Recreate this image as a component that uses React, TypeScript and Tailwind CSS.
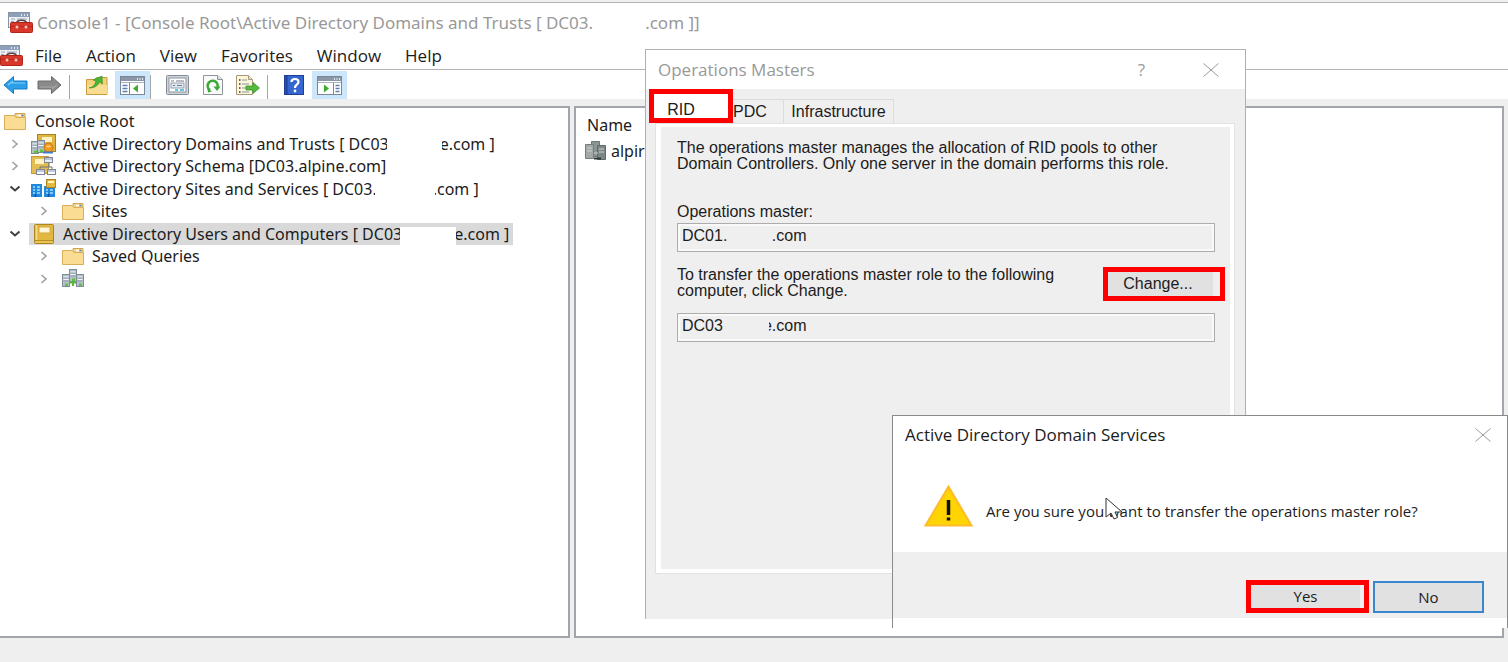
import { useState } from 'react';
import clsx from 'clsx';

const MmcIcon = () => (
  <svg width="25" height="21" viewBox="0 0 25 21">
    <rect x="0.5" y="0.5" width="21" height="15" fill="#eef1f5" stroke="#8794a6" />
    <rect x="1" y="1" width="20" height="4" fill="#8da0b8" />
    <path d="M13 3h1M16 3h1M19 3h1" stroke="#fff" strokeWidth="1.4" />
    <path d="M3 7h4M3 9.5h3M3 12h3M9 7h10" stroke="#9aa5b3" />
    <path d="M8.500 11.500c0-4.500 10-4.500 10 0" fill="none" stroke="#5a4340" strokeWidth="1.5" />
    <rect x="2.500" y="10.500" width="22" height="10" rx="1" fill="#d8382a" stroke="#b32418" />
    <path d="M3 14.500h21" stroke="#b8281b" />
    <circle cx="9" cy="15" r="1.500" fill="#f5c3bb" />
    <circle cx="18" cy="15" r="1.500" fill="#f5c3bb" />
  </svg>
);

const ArrowIcon = ({ forward = false }: any) => (
  <svg width="25" height="20" viewBox="0 0 25 20" className={clsx(forward && 'rotate-180')}>
    <path
      d="M1 10 10.500 1.500V6H24v8H10.500v4.500z"
      fill={forward ? '#8a8a8a' : '#2b9fe8'}
      stroke={forward ? '#6c6c6c' : '#1678c2'}
      strokeLinejoin="round"
    />
    <path d="M5 10 9.500 6.500V8H22" fill="none" stroke={forward ? '#a5a5a5' : '#7fd0fa'} strokeWidth="1.200" />
  </svg>
);

const UpFolderIcon = () => (
  <svg width="22" height="20" viewBox="0 0 22 20">
    <path d="M.5 4.500h8l2-2h10.500v17H.5z" fill="#f5d078" stroke="#c99b3b" />
    <path d="M1 10h20v9H1z" fill="#f8dc92" />
    <path d="M3 13c4-1 6-3 7-7L7 5l9-4 .5 8-3-2c-2 4-5 6-10.500 6z" fill="#4bb43a" stroke="#2f8f24" strokeWidth=".6" />
  </svg>
);

const PaneIcon = ({ right = false }: any) => (
  <svg width="25" height="19" viewBox="0 0 25 19">
    <rect x=".5" y=".5" width="24" height="18" fill="#fff" stroke="#7d8794" />
    <rect x="1" y="1" width="23" height="4" fill="#8b97a8" />
    <path d="M17 3h1M19.500 3h1M22 3h1" stroke="#fff" strokeWidth="1.300" />
    <path d="M1 6.500h23" stroke="#aab2bd" />
    {right ? (
      <>
        <path d="M16.500 7v11" stroke="#7d8794" />
        <path d="M18.500 9.500h4M18.500 12.500h4M18.500 15.500h4" stroke="#5c7fae" strokeWidth="1.300" />
        <path d="M7 8.500v8l5-4z" fill="#3cab2f" />
      </>
    ) : (
      <>
        <path d="M9.500 7v11" stroke="#7d8794" />
        <path d="M2.500 9.500h5M2.500 12.500h5M2.500 15.500h5" stroke="#5c7fae" strokeWidth="1.300" />
        <path d="M18 8.500v8l-5-4z" fill="#3cab2f" />
      </>
    )}
  </svg>
);

const PropertiesIcon = () => (
  <svg width="23" height="20" viewBox="0 0 23 20">
    <rect x=".5" y=".5" width="22" height="19" rx="1" fill="#cfd4da" stroke="#858c95" />
    <rect x="3" y="3" width="17" height="14" fill="#fff" stroke="#8b949f" />
    <path d="M5 6h3M10 6h8" stroke="#778" />
    <rect x="5" y="8" width="13" height="5" fill="#dfe6ee" stroke="#97a2b0" />
    <path d="M7 10.500h2M11 10.500h5" stroke="#6f7f93" />
    <path d="M9 15h3M14 15h4" stroke="#36b3e6" strokeWidth="1.500" />
  </svg>
);

const RefreshIcon = () => (
  <svg width="20" height="20" viewBox="0 0 20 20">
    <path d="M.5.5h14l5 4v15H.5z" fill="#fafafa" stroke="#8f959c" />
    <path d="M14.500.5v4h5" fill="#dde1e5" stroke="#8f959c" />
    <path d="M7 15A5 5 0 1 1 14.500 12" fill="none" stroke="#3aa935" strokeWidth="2.600" />
    <path d="M10.500 11.500h7L14 16z" fill="#3aa935" />
    <path d="M4.500 13.500 9 16.500l-4 1z" fill="#3aa935" />
  </svg>
);

const ExportIcon = () => (
  <svg width="24" height="20" viewBox="0 0 24 20">
    <path d="M.5.5h12l4 4v15H.5z" fill="#fdf6d8" stroke="#a39a7d" />
    <path d="M12.500.5v4h4" fill="#eee2b2" stroke="#a39a7d" />
    <path d="M3 5h1.500M3 9h1.500M3 13h1.500M3 17h1.500" stroke="#334" strokeWidth="1.500" />
    <path d="M6 5h5M6 9h7M6 13h5M6 17h7" stroke="#8d93a6" strokeWidth="1.200" />
    <path d="M10 11h7V7.500l6.500 5.500-6.500 5.500V15h-7z" fill="#55bb3f" stroke="#318f24" strokeWidth=".7" />
  </svg>
);

const HelpIcon = () => (
  <svg width="20" height="20" viewBox="0 0 20 20">
    <rect x=".5" y=".5" width="19" height="19" fill="#3565cf" stroke="#1f3f94" />
    <path d="M2.500 1v18" stroke="#20409a" strokeWidth="2" />
    <path d="M7.500 7c0-4 7-4 7 0 0 2.500-3.500 2.500-3.500 6" fill="none" stroke="#fff" strokeWidth="2.200" />
    <circle cx="11" cy="16" r="1.400" fill="#fff" />
  </svg>
);

const FolderIcon = () => (
  <svg width="22" height="17" viewBox="0 0 22 17">
    <path d="M11 .5h10v4H11z" fill="#f3d389" stroke="#cfa54d" />
    <path d="M14 2.500h3" stroke="#fff" strokeWidth="1.500" />
    <path d="M17.500 2.500h2" stroke="#3f83c9" strokeWidth="1.500" />
    <path d="M.5 2.500h9.500l2 2h9.500v12H.5z" fill="#fbdc93" stroke="#d9ae5a" />
  </svg>
);

const BookIcon = () => (
  <svg width="20" height="20" viewBox="0 0 20 20">
    <rect x=".5" y=".5" width="19" height="19" rx="1" fill="#e2b83f" stroke="#ae8521" />
    <path d="M2.500 1v15" stroke="#f5dd87" strokeWidth="1.500" />
    <rect x="5" y="3" width="11" height="6" fill="#fff6d6" stroke="#d2a93c" />
    <path d="M1 16.500h18" stroke="#b98e24" />
    <path d="M1 18h18" stroke="#f0d069" />
  </svg>
);

const Server = ({ x, y }: any) => (
  <g transform={`translate(${x} ${y})`}>
    <rect x=".5" y=".5" width="7" height="12" fill="#b5c1cb" stroke="#7f8b97" />
    <path d="M1.500 3h5M1.500 5.500h5" stroke="#f4f7f9" strokeWidth="1.200" />
    <path d="M1.500 4.200h5M1.500 7h5" stroke="#7f8b97" strokeWidth=".7" />
    <rect x="3" y="9.500" width="3" height="2.500" fill="#5fc23a" />
  </g>
);

const DomainsIcon = () => (
  <svg width="25" height="20" viewBox="0 0 25 20">
    <rect x="6.500" y=".5" width="18" height="17" fill="#e0b640" stroke="#aa8222" />
    <rect x="11" y="3" width="10" height="5" fill="#fff2c4" />
    <Server x={0} y={7} />
    <Server x={6} y={6} />
    <circle cx="17.500" cy="13.500" r="4.500" fill="#f39a1e" stroke="#c47410" />
    <path d="M15.500 12.500h4" stroke="#ffd88a" strokeWidth="1.500" />
    <path d="M12 18.500h10" stroke="#3b7fd1" strokeWidth="2" />
  </svg>
);

const SchemaIcon = () => (
  <svg width="25" height="20" viewBox="0 0 25 20">
    <rect x=".5" y=".5" width="17" height="17" fill="#e3bd52" stroke="#c39c3a" />
    <rect x="4" y="3" width="9" height="5" fill="#fff2c4" />
    <path d="M18 6v5M9 14v-3h12v3" fill="none" stroke="#69727d" />
    <rect x="13.500" y="1.500" width="8" height="5" fill="#e8ecf3" stroke="#7c8694" />
    <rect x="5.500" y="13.500" width="8" height="5" fill="#f7f9fc" stroke="#7c8694" />
    <rect x="16.500" y="13.500" width="8" height="5" fill="#f7f9fc" stroke="#7c8694" />
    <path d="M14 3h7M6 15h7M17 15h7" stroke="#8d9bb8" />
  </svg>
);

const SitesIcon = () => (
  <svg width="25" height="19" viewBox="0 0 25 19">
    <path d="M0 5h11v13H0zM13 7h11v11H13z" fill="#2088dd" />
    <path d="M2 8h2M6 8h3M2 11h2M6 11h3M2 14h2M6 14h3M15 11h2M19 11h3M15 14h2M19 14h3" stroke="#a8dcff" strokeWidth="1.500" />
    <path d="M4.500 18v-3M17.500 18v-3" stroke="#0d4f9e" strokeWidth="1.500" />
    <rect x="15.500" y=".5" width="9" height="8" fill="#e4b83c" stroke="#ae8521" />
    <path d="M17 3h6" stroke="#fff2c4" strokeWidth="2" />
  </svg>
);

const DomainIcon = () => (
  <svg width="24" height="20" viewBox="0 0 24 20">
    <Server x={8} y={0} />
    <Server x={1} y={5} />
    <Server x={15} y={5} />
    <path d="M9 13.500h6M12 13v4" stroke="#57b935" strokeWidth="2" />
  </svg>
);

const GreyDomainIcon = () => (
  <svg width="22" height="20" viewBox="0 0 22 20">
    <path d="M6.500.5h8v15h-8z" fill="#8d9494" stroke="#6f7676" />
    <path d="M.5 3.500h8v14h-8z" fill="#a2a9a9" stroke="#767d7d" />
    <path d="M12.500 4.500h8v14h-8z" fill="#7e8787" stroke="#626969" />
    <path d="M2 7h5M2 10h5M14 8h5M14 11h5M9 12h4" stroke="#c9cfcf" />
    <path d="M9 17.500h7" stroke="#2f3535" strokeWidth="2" />
  </svg>
);

const WarningIcon = () => (
  <svg width="49" height="42" viewBox="0 0 49 42">
    <path d="M24.500 1.500 47.500 40.500H1.500z" fill="#ffd400" stroke="#fdbb2d" strokeWidth="2" />
    <path d="M24.500 15v15" stroke="#111" strokeWidth="3.500" />
    <path d="M24.500 32.500v3" stroke="#111" strokeWidth="3.500" />
  </svg>
);

const CloseIcon = () => (
  <svg width="16" height="14" viewBox="0 0 16 14">
    <path d="M.5.5l15 13M15.500.5l-15 13" stroke="#999" fill="none" />
  </svg>
);

const Chevron = ({ open = false }: any) =>
  open ? (
    <svg width="12" height="8" viewBox="0 0 12 8">
      <path d="M1.500 1.500 6 5.500l4.500-4" fill="none" stroke="#404040" strokeWidth="2" />
    </svg>
  ) : (
    <svg width="8" height="10" viewBox="0 0 8 10">
      <path d="M1.500 1 6 5 1.500 9" fill="none" stroke="#a0a0a0" strokeWidth="1.600" />
    </svg>
  );

const tree = [
  { before: 'Active Directory Domains and Trusts [ DC03', after: 'e.com ]', gap: 'w-[55px]', icon: <DomainsIcon /> },
  { before: 'Active Directory Schema [DC03.alpine.com]', icon: <SchemaIcon /> },
  { before: 'Active Directory Sites and Services [ DC03.', after: '.com ]', gap: 'w-[60px]', icon: <SitesIcon />, open: true },
  { before: 'Sites', icon: <FolderIcon />, child: true },
  { before: 'Active Directory Users and Computers [ DC03', after: 'e.com ]', gap: 'w-[56px]', icon: <BookIcon />, open: true, selected: true },
  { before: 'Saved Queries', icon: <FolderIcon />, child: true },
  { before: '', icon: <DomainIcon />, child: true },
];

const Separator = () => <span className="h-6 w-px bg-[#a8a8a8]" />;

const ToolButton = ({ label, className, active, children }: any) => (
  <button
    aria-label={label}
    className={clsx('flex h-7 items-center justify-center', active && 'bg-[#cce6fb]', className)}
  >
    {children}
  </button>
);

const Console = () => (
  <div className="flex min-h-screen flex-col bg-[#efefef] font-['Noto_Sans','Open_Sans',sans-serif]">
    <div className="h-[2px]" />
    <header className="border-t border-[#b4b4b8] bg-white">
      <div className="flex h-[39px] items-center gap-1 pl-2 text-[17px] text-[#999]">
        <MmcIcon />
        <h1 className="whitespace-pre">
          Console1 - [Console Root\Active Directory Domains and Trusts [ DC03.
          <span className="inline-block w-[52px]" />
          .com ]]
        </h1>
      </div>
      <nav className="flex h-7 items-center gap-6 border-b border-[#b4b4b8] font-['Open_Sans','Noto_Sans',sans-serif] text-[17px] text-[#1c1c1c]">
        <div className="-ml-[2px] -mr-3">
          <MmcIcon />
        </div>
        {['File', 'Action', 'View', 'Favorites', 'Window', 'Help'].map((item) => (
          <button key={item}>{item}</button>
        ))}
      </nav>
      <div className="flex h-[29px] items-end">
        <ToolButton label="Back" className="w-[30px]"><ArrowIcon /></ToolButton>
        <ToolButton label="Forward" className="w-[39px]"><ArrowIcon forward /></ToolButton>
        <Separator />
        <ToolButton label="Up one level" className="ml-[9px] w-9"><UpFolderIcon /></ToolButton>
        <ToolButton label="Console tree" className="w-[35px]" active><PaneIcon /></ToolButton>
        <Separator />
        <ToolButton label="Properties" className="ml-2 w-9"><PropertiesIcon /></ToolButton>
        <ToolButton label="Refresh" className="w-9"><RefreshIcon /></ToolButton>
        <ToolButton label="Export list" className="mr-[2px] w-[34px]"><ExportIcon /></ToolButton>
        <Separator />
        <ToolButton label="Help topics" className="ml-2 w-9"><HelpIcon /></ToolButton>
        <ToolButton label="Action pane" className="w-[35px]" active><PaneIcon right /></ToolButton>
      </div>
    </header>

    <main className="mt-[7px] mb-6 flex flex-1 gap-1 pr-1">
      <section className="w-[570px] border-2 border-l-0 border-[#a3a5ac] bg-white pt-[2px] text-[16px] text-[#1c1c1c]">
        <ul className="grid h-[180px] auto-rows-fr">
          <li className="flex items-center gap-[9px] pl-1">
            <FolderIcon />
            Console Root
          </li>
          {tree.map((node) => (
            <li key={node.before} className={clsx('flex items-center', node.child && 'pl-[29px]')}>
              <span className="flex w-[29px] justify-center">
                <Chevron open={node.open} />
              </span>
              <span className={clsx('flex h-full items-center pr-1', node.selected && 'bg-[#d9d9d9]')}>
                <span className="mr-[5px] flex w-[29px] justify-center">{node.icon}</span>
                <span className="whitespace-pre">{node.before}</span>
                {node.after && (
                  <>
                    <span className={clsx('relative -mx-[2px] h-[18px] self-end bg-white', node.gap)} />
                    <span className="whitespace-pre">{node.after}</span>
                  </>
                )}
              </span>
            </li>
          ))}
        </ul>
      </section>
      <section className="flex-1 border-2 border-[#a3a5ac] bg-white pt-[5px] pl-[9px] text-[16px] text-[#1c1c1c]">
        <div className="h-6 pl-[2px] leading-6">Name</div>
        <div className="flex h-7 items-center gap-1">
          <GreyDomainIcon />
          alpir
        </div>
      </section>
    </main>
  </div>
);

const OperationsMasters = () => {
  const [tab, setTab] = useState('RID');

  return (
    <div
      role="dialog"
      aria-label="Operations Masters"
      className="absolute top-[49px] left-[645px] h-[570px] w-[601px] border border-b-0 border-[#b0b0b0] bg-[#efefef] text-[16px] leading-4 text-[#1c1c1c]"
    >
      <div className="flex h-[39px] items-center bg-white pr-[26px] pl-3 font-['Open_Sans','Noto_Sans',sans-serif] text-[17px] text-[#999]">
        <h2 className="flex-1">Operations Masters</h2>
        <button aria-label="Help" className="mr-[58px]">?</button>
        <button aria-label="Close"><CloseIcon /></button>
      </div>
      <div className="px-[9px]">
        <div role="tablist" className="-ml-[6px] flex h-[34px] items-end">
          <button
            role="tab"
            aria-selected={tab === 'RID'}
            onClick={() => setTab('RID')}
            className="h-[34px] w-[84px] border-[5px] border-[#ff0000] bg-white pr-5 pt-2"
          >
            RID
          </button>
          <button
            role="tab"
            aria-selected={tab === 'PDC'}
            onClick={() => setTab('PDC')}
            className="h-6 w-[51px] border-t border-r border-[#dcdcdc] pr-5"
          >
            PDC
          </button>
          <button
            role="tab"
            aria-selected={tab === 'Infrastructure'}
            onClick={() => setTab('Infrastructure')}
            className="h-6 w-[110px] border-t border-r border-[#dcdcdc]"
          >
            Infrastructure
          </button>
        </div>
        <div className="mr-[1px] border border-[#e2e2e2] bg-white p-1 pt-[3px] pl-[5px]">
          <div className="h-[442px] bg-[#efefef] pt-[13px] pr-[15px] pl-4">
            <p>
              The operations master manages the allocation of RID pools to other
              <br />
              Domain Controllers. Only one server in the domain performs this role.
            </p>
            <label htmlFor="current" className="mt-8 block">Operations master:</label>
            <input
              id="current"
              readOnly
              value="DC01.          .com"
              className="mt-[3px] block h-[29px] w-full border border-[#adadad] bg-[#efefef] pb-1 pl-1 shadow-[inset_0_0_0_2px_#f9f9f9]"
            />
            <div className="mt-[15px] flex">
              <label htmlFor="target" className="flex-1">
                To transfer the operations master role to the following
                <br />
                computer, click Change.
              </label>
              <button className="-mr-[10px] h-[34px] w-[122px] border-[5px] border-[#ff0000] bg-[#e1e1e1] pr-3 shadow-[inset_-7px_0_0_#efefef]">
                Change...
              </button>
            </div>
            <div className="relative mt-3">
              <input
                id="target"
                readOnly
                value="DC03         e.com"
                className="block h-[29px] w-full border border-[#adadad] bg-[#efefef] pb-1 pl-1 shadow-[inset_0_0_0_2px_#f9f9f9]"
              />
              <span className="absolute top-1 left-[54px] h-5 w-[38px] bg-[#efefef]" />
            </div>
          </div>
        </div>
      </div>
    </div>
  );
};

const ConfirmTransfer = () => (
  <div
    role="alertdialog"
    aria-label="Active Directory Domain Services"
    className="absolute top-[415px] right-0 w-[616px] border border-b-0 border-[#8a8a8a] bg-white text-[#1c1c1c]"
  >
    <div className="flex h-[38px] items-center justify-between pr-4 pl-3 text-[17px]">
      <h2>Active Directory Domain Services</h2>
      <button aria-label="Close"><CloseIcon /></button>
    </div>
    <div className="flex h-[98px] items-center gap-[13px] pt-[6px] pl-[31px] text-[15px]">
      <WarningIcon />
      <p className="pt-[10px]">Are you sure you want to transfer the operations master role?</p>
    </div>
    <div className="mb-[10px] flex h-[66px] items-end justify-end gap-1 bg-[#efefef] pr-[23px] pb-[5px] text-[15px]">
      <button className="h-[33px] w-[123px] border-[5px] border-[#ff0000] bg-[#e1e1e1] pr-1 shadow-[inset_-4px_0_0_#efefef]">
        Yes
      </button>
      <button className="h-8 w-[111px] border-2 border-[#3a86cf] bg-[#e1e1e1]">No</button>
    </div>
    <svg width="19" height="24" viewBox="0 0 19 24" className="absolute top-[81px] left-[212px]">
      <path d="M1 1v19l5-4 3 6 3.500-1.500L10 15h7z" fill="#fff" stroke="#333" />
    </svg>
  </div>
);

const App = () => (
  <div className="relative overflow-hidden font-['Open_Sans','Noto_Sans',sans-serif]">
    <Console />
    <div className="font-['Liberation_Sans',Arial,sans-serif]">
      <OperationsMasters />
    </div>
    <ConfirmTransfer />
  </div>
);

export default App;
